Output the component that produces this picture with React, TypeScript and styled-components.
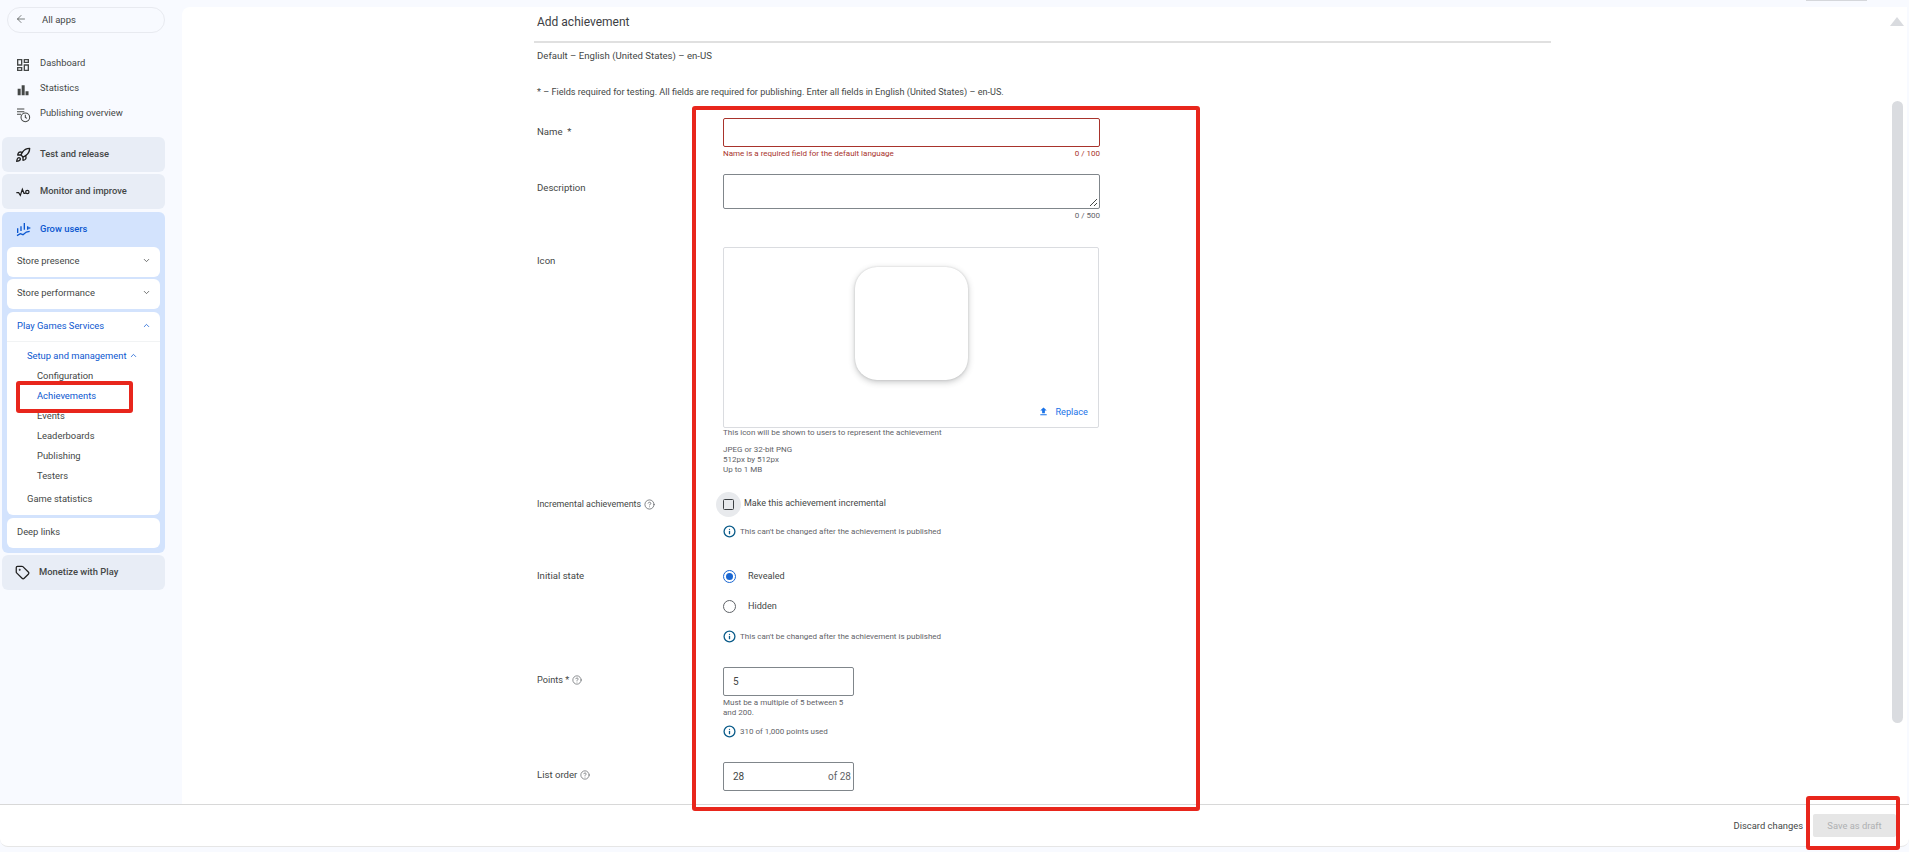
import React, { FunctionComponent } from "react";
import styled, { createGlobalStyle } from "styled-components";
import { ArrowLeft, ChevronDown, ChevronUp, CircleHelp, Info, Rocket, Tag } from "lucide-react";

const GlobalStyle = createGlobalStyle`
  html, body {
    margin: 0;
    height: 100%;
    overflow: hidden;
    background: #f8faff;
    font-family: Roboto, "Liberation Sans", sans-serif;
    color: #444746;
  }
`;

const Page = styled.div`
  position: relative;
  width: 1909px;
  height: 852px;
  display: flex;
  flex-direction: column;
  overflow: hidden;
`;

const Body = styled.div`
  display: flex;
  height: 804px;
  flex: none;
`;

const Sidebar = styled.nav`
  width: 182px;
  flex: none;
  padding: 7px 17px 0 2px;
  box-sizing: border-box;
  font-size: 10px;
`;

const BackPill = styled.div`
  margin-left: 5px;
  height: 26px;
  box-sizing: border-box;
  border: 1px solid #e8eaf0;
  border-radius: 13px;
  display: flex;
  align-items: center;
  gap: 15px;
  padding: 0 0 2px 7px;
  font-size: 9.5px;
`;

const TopLinks = styled.div`
  margin-top: 18px;
  margin-bottom: 11px;
`;

const TopLink = styled.div`
  height: 25px;
  display: flex;
  align-items: center;
  padding-left: 13px;
  gap: 9px;
  font-size: 9.4px;
  svg {
    flex: none;
    margin-bottom: -2px;
  }
  span {
    margin-bottom: 2px;
  }
`;

const NavCard = styled.div`
  height: 35px;
  box-sizing: border-box;
  background: #e8edf6;
  border-radius: 6px;
  margin-bottom: 2px;
  display: flex;
  align-items: center;
  gap: 9px;
  padding-left: 13px;
  font-size: 9.4px;
  font-weight: 500;
  svg {
    flex: none;
  }
  span {
    margin-bottom: 2px;
  }
`;

const GrowCard = styled.div`
  background: #d3e3fd;
  border-radius: 6px;
  margin: 3px 0 2px;
  padding: 0 5px 5px;
`;

const GrowHeader = styled.div`
  height: 33px;
  display: flex;
  align-items: center;
  gap: 9px;
  padding-left: 8px;
  color: #0b57d0;
  font-size: 9.4px;
  font-weight: 500;
  svg {
    flex: none;
  }
`;

const SubCard = styled.div<{ $top?: number }>`
  background: #fff;
  border-radius: 6px;
  margin-top: ${(p) => p.$top ?? 2}px;
`;

const SubHeader = styled.div<{ $active?: boolean; $line?: boolean }>`
  height: 30px;
  box-sizing: border-box;
  display: flex;
  align-items: center;
  justify-content: space-between;
  padding: 0 9px 3px 10px;
  font-size: 9.4px;
  color: ${(p) => (p.$active ? "#0b57d0" : "#444746")};
  border-bottom: ${(p) => (p.$line ? "1px solid #f1f3f4" : "none")};
`;

const SubList = styled.div`
  padding: 4px 0 6px;
`;

const SubItem = styled.div<{ $level: number; $active?: boolean }>`
  height: 20px;
  box-sizing: border-box;
  padding-bottom: 2px;
  display: flex;
  align-items: center;
  gap: 2px;
  font-size: 9.4px;
  padding-left: ${(p) => (p.$level === 1 ? 20 : 30)}px;
  color: ${(p) => (p.$active ? "#0b57d0" : "#444746")};
`;

const GameStats = styled(SubItem)`
  margin-top: 3px;
`;

const RightColumn = styled.div`
  flex: 1;
  display: flex;
  flex-direction: column;
  min-width: 0;
  padding-right: 2px;
`;

const TopStrip = styled.div`
  height: 7px;
  flex: none;
  display: flex;
  justify-content: flex-end;
  padding-right: 40px;
`;

const StripTab = styled.div`
  width: 61px;
  height: 1px;
  background: #d5d7db;
`;

const Main = styled.main`
  flex: 1;
  min-height: 0;
  background: #fff;
  border-radius: 8px 0 0 0;
  display: flex;
  overflow: hidden;
`;

const FormArea = styled.div`
  width: 1017px;
  margin-left: 352px;
  flex: none;
`;

const Title = styled.h1`
  margin: 0;
  height: 36px;
  box-sizing: border-box;
  padding: 8px 0 0 3px;
  border-bottom: 2px solid #e0e0e0;
  font-size: 12px;
  line-height: 14px;
  font-weight: 400;
  color: #3c4043;
`;

const Meta = styled.div<{ $top: number; $size: number }>`
  margin-top: ${(p) => p.$top}px;
  padding-left: 3px;
  font-size: ${(p) => p.$size}px;
  line-height: 14px;
`;

const Row = styled.div<{ $top: number }>`
  display: grid;
  grid-template-columns: 186px 377px;
  padding-left: 3px;
  margin-top: ${(p) => p.$top}px;
`;

const Label = styled.div<{ $pad?: number; $size?: number }>`
  padding-top: ${(p) => p.$pad ?? 7}px;
  font-size: ${(p) => p.$size ?? 9.6}px;
  line-height: 14px;
  display: flex;
  align-items: flex-start;
  gap: 3px;
  svg {
    margin-top: 2px;
    flex: none;
  }
`;

const Input = styled.div<{ $error?: boolean; $narrow?: boolean; $tall?: boolean }>`
  box-sizing: border-box;
  width: ${(p) => (p.$narrow ? "131px" : "377px")};
  height: ${(p) => (p.$tall ? 35 : 29)}px;
  border: 1px solid ${(p) => (p.$error ? "#a8332c" : "#80868b")};
  border-radius: 2px;
  display: flex;
  align-items: center;
  justify-content: space-between;
  padding: 0 2px 0 9px;
  font-size: 10px;
  position: relative;
`;

const ResizeHandle = styled.svg`
  position: absolute;
  right: 1px;
  bottom: 1px;
`;

const FieldNote = styled.div<{ $error?: boolean }>`
  display: flex;
  justify-content: space-between;
  height: 12px;
  line-height: 12px;
  margin-top: 1px;
  font-size: 8px;
  color: ${(p) => (p.$error ? "#a8332c" : "#5f6368")};
  span:last-child {
    margin-left: auto;
  }
`;

const IconBox = styled.div`
  box-sizing: border-box;
  width: 376px;
  height: 181px;
  border: 1px solid #dadce0;
  border-radius: 2px;
  padding-top: 19px;
  display: flex;
  flex-direction: column;
  align-items: center;
`;

const IconPreview = styled.div`
  width: 113px;
  height: 113px;
  flex: none;
  background: #fff;
  border-radius: 22px;
  box-shadow: 0 2px 6px rgba(60, 64, 67, 0.3), 0 0 2px rgba(60, 64, 67, 0.2);
`;

const ReplaceButton = styled.div`
  align-self: flex-end;
  margin: 26px 10px 0 0;
  display: flex;
  align-items: center;
  gap: 6px;
  color: #1a73e8;
  font-size: 9.2px;
`;

const SmallText = styled.div<{ $top?: number; $tight?: boolean; $width?: number }>`
  margin-top: ${(p) => p.$top ?? 0}px;
  font-size: 8px;
  line-height: ${(p) => (p.$tight ? 9.5 : 10)}px;
  width: ${(p) => (p.$width ? `${p.$width}px` : "auto")};
  color: #5f6368;
`;

const CheckRow = styled.div`
  height: 26px;
  display: flex;
  align-items: center;
  margin-left: -7px;
  font-size: 9px;
  span {
    margin-bottom: 2px;
  }
`;

const CheckHalo = styled.div`
  width: 25px;
  height: 25px;
  border-radius: 50%;
  background: #e8eaed;
  display: flex;
  align-items: center;
  justify-content: center;
  margin-right: 3px;
`;

const CheckBox = styled.div`
  width: 11px;
  height: 11px;
  border: 1.5px solid #3c4043;
  border-radius: 1.5px;
  box-sizing: border-box;
`;

const InfoLine = styled.div<{ $top: number }>`
  display: flex;
  align-items: center;
  gap: 4px;
  height: 14px;
  margin-top: ${(p) => p.$top}px;
  font-size: 8px;
  color: #5f6368;
  svg {
    flex: none;
    color: #0b5c8a;
  }
`;

const RadioRow = styled.div`
  height: 30px;
  display: flex;
  align-items: center;
  gap: 12px;
  font-size: 9.1px;
  span {
    margin-bottom: 1px;
  }
`;

const Radio = styled.div<{ $checked?: boolean }>`
  width: 13px;
  height: 13px;
  border-radius: 50%;
  box-sizing: border-box;
  border: 1.5px solid ${(p) => (p.$checked ? "#1a67d2" : "#5f6368")};
  display: flex;
  align-items: center;
  justify-content: center;
  &::after {
    content: "";
    width: 7px;
    height: 7px;
    border-radius: 50%;
    background: ${(p) => (p.$checked ? "#1a67d2" : "transparent")};
  }
`;

const OfTotal = styled.span`
  font-size: 10px;
  color: #5f6368;
`;

const ScrollColumn = styled.div`
  margin-left: auto;
  width: 16px;
  flex: none;
  padding-top: 10px;
  display: flex;
  flex-direction: column;
  align-items: center;
  margin-right: 2px;
`;

const ScrollArrow = styled.div`
  width: 0;
  height: 0;
  border-left: 7px solid transparent;
  border-right: 7px solid transparent;
  border-bottom: 9px solid #d9dbdf;
`;

const ScrollThumb = styled.div`
  margin-top: 75px;
  width: 11px;
  height: 622px;
  border-radius: 6px;
  background: #dadce0;
`;

const Footer = styled.footer`
  height: 43px;
  flex: none;
  box-sizing: border-box;
  background: #fff;
  border-top: 1px solid #d8d8d8;
  border-bottom: 1px solid #e6e6e6;
  border-radius: 0 0 8px 8px;
  display: flex;
  align-items: center;
  justify-content: flex-end;
  gap: 10px;
  padding-right: 13px;
  font-size: 9.4px;
`;

const SaveButton = styled.div`
  width: 83px;
  height: 23px;
  background: #e6e6e6;
  border-radius: 2px;
  color: #aeb0b2;
  display: flex;
  align-items: center;
  justify-content: center;
`;

const Annotation = styled.div<{ $x: number; $y: number; $w: number; $h: number }>`
  position: absolute;
  left: ${(p) => p.$x}px;
  top: ${(p) => p.$y}px;
  width: ${(p) => p.$w}px;
  height: ${(p) => p.$h}px;
  box-sizing: border-box;
  border: 4px solid #e8261c;
  border-radius: 3px;
  pointer-events: none;
`;

const DashboardIcon = () => (
  <svg width="16" height="16" viewBox="0 0 24 24" fill="#444746">
    <path d="M19 5v2h-4V5h4M9 5v6H5V5h4m10 8v6h-4v-6h4M9 17v2H5v-2h4M21 3h-8v6h8V3zM11 3H3v10h8V3zm10 8h-8v10h8V11zm-10 4H3v6h8v-6z" />
  </svg>
);

const StatsIcon = () => (
  <svg width="16" height="16" viewBox="0 0 24 24" fill="#444746">
    <path d="M4 10h4.5v10H4zM15.8 14h4.5v6h-4.5zM10 5h4.5v15H10z" />
  </svg>
);

const OverviewIcon = () => (
  <svg width="16" height="16" viewBox="0 0 24 24" fill="none" stroke="#444746" strokeWidth="1.6">
    <path d="M3 3h11M3 7h11M3 11h6" />
    <circle cx="15.5" cy="15.5" r="6.5" />
    <path d="M15.5 11.5v4l2.5 1.5" />
  </svg>
);

const PulseIcon = () => (
  <svg width="16" height="16" viewBox="0 0 24 24" fill="none" stroke="#1f1f1f" strokeWidth="1.8">
    <path d="M2 13h3.5l2.5 4 3-9 2.5 6h2.5" />
    <circle cx="18.5" cy="12" r="2.5" />
  </svg>
);

const GrowIcon = () => (
  <svg width="16" height="16" viewBox="0 0 24 24" fill="none" stroke="#0b57d0" strokeWidth="2">
    <path d="M4 11v7M9 8v7M14 3v10M19 8v5" />
    <path d="M3 22l5-3 4 1.5 5-4 5-1" />
    <path d="M18 10.5h5" />
  </svg>
);

const UploadIcon = () => (
  <svg width="11" height="11" viewBox="0 0 24 24" fill="#1a73e8">
    <path d="M9 16h6v-6h4l-7-7-7 7h4v6zm-4 2h14v2H5v-2z" />
  </svg>
);

const Help = ({ size = 10 }: { size?: number }) => <CircleHelp size={size} strokeWidth={1.7} color="#5f6368" />;

const InfoMark = () => <Info size={13} strokeWidth={2.4} />;

const App: FunctionComponent = () => {
  return (
    <Page>
      <GlobalStyle />
      <Body>
        <Sidebar>
          <BackPill>
            <ArrowLeft size={12} strokeWidth={1.4} />
            All apps
          </BackPill>
          <TopLinks>
            <TopLink><DashboardIcon /><span>Dashboard</span></TopLink>
            <TopLink><StatsIcon /><span>Statistics</span></TopLink>
            <TopLink><OverviewIcon /><span>Publishing overview</span></TopLink>
          </TopLinks>
          <NavCard><Rocket size={16} strokeWidth={2} color="#1f1f1f" /><span>Test and release</span></NavCard>
          <NavCard><PulseIcon /><span>Monitor and improve</span></NavCard>
          <GrowCard>
            <GrowHeader><GrowIcon />Grow users</GrowHeader>
            <SubCard>
              <SubHeader>Store presence<ChevronDown size={9} strokeWidth={2} /></SubHeader>
            </SubCard>
            <SubCard>
              <SubHeader>Store performance<ChevronDown size={9} strokeWidth={2} /></SubHeader>
            </SubCard>
            <SubCard $top={3}>
              <SubHeader $active $line>Play Games Services<ChevronUp size={9} strokeWidth={2} /></SubHeader>
              <SubList>
                <SubItem $level={1} $active>Setup and management <ChevronUp size={9} strokeWidth={2} /></SubItem>
                <SubItem $level={2}>Configuration</SubItem>
                <SubItem $level={2} $active>Achievements</SubItem>
                <SubItem $level={2}>Events</SubItem>
                <SubItem $level={2}>Leaderboards</SubItem>
                <SubItem $level={2}>Publishing</SubItem>
                <SubItem $level={2}>Testers</SubItem>
                <GameStats $level={1}>Game statistics</GameStats>
              </SubList>
            </SubCard>
            <SubCard $top={3}>
              <SubHeader>Deep links</SubHeader>
            </SubCard>
          </GrowCard>
          <NavCard><Tag size={15} strokeWidth={2} color="#1f1f1f" /><span>Monetize with Play</span></NavCard>
        </Sidebar>

        <RightColumn>
          <TopStrip><StripTab /></TopStrip>
          <Main>
            <FormArea>
              <Title>Add achievement</Title>
              <Meta $top={6} $size={9.6}>Default – English (United States) – en-US</Meta>
              <Meta $top={22} $size={9.1}>* – Fields required for testing. All fields are required for publishing. Enter all fields in English (United States) – en-US.</Meta>

              <Row $top={19}>
                <Label>Name&nbsp; *</Label>
                <div>
                  <Input $error />
                  <FieldNote $error>
                    <span>Name is a required field for the default language</span>
                    <span>0 / 100</span>
                  </FieldNote>
                </div>
              </Row>

              <Row $top={14}>
                <Label>Description</Label>
                <div>
                  <Input $tall>
                    <ResizeHandle width="9" height="9" viewBox="0 0 9 9" stroke="#444746" fill="none">
                      <path d="M1 8l7-7M5 8l3-3" />
                    </ResizeHandle>
                  </Input>
                  <FieldNote><span>0 / 500</span></FieldNote>
                </div>
              </Row>

              <Row $top={25}>
                <Label>Icon</Label>
                <div>
                  <IconBox>
                    <IconPreview />
                    <ReplaceButton><UploadIcon />Replace</ReplaceButton>
                  </IconBox>
                  <SmallText>This icon will be shown to users to represent the achievement</SmallText>
                  <SmallText $top={7}>
                    JPEG or 32-bit PNG<br />512px by 512px<br />Up to 1 MB
                  </SmallText>
                </div>
              </Row>

              <Row $top={16}>
                <Label $pad={6} $size={8.9}>Incremental achievements <Help size={11} /></Label>
                <div>
                  <CheckRow>
                    <CheckHalo><CheckBox /></CheckHalo>
                    <span>Make this achievement incremental</span>
                  </CheckRow>
                  <InfoLine $top={7}><InfoMark />This can't be changed after the achievement is published</InfoLine>
                </div>
              </Row>

              <Row $top={23}>
                <Label $pad={8}>Initial state</Label>
                <div>
                  <RadioRow><Radio $checked /><span>Revealed</span></RadioRow>
                  <RadioRow><Radio /><span>Hidden</span></RadioRow>
                  <InfoLine $top={8}><InfoMark />This can't be changed after the achievement is published</InfoLine>
                </div>
              </Row>

              <Row $top={24}>
                <Label $pad={6} $size={9.2}>Points * <Help /></Label>
                <div>
                  <Input $narrow>5</Input>
                  <SmallText $top={2} $tight $width={131}>Must be a multiple of 5 between 5 and 200.</SmallText>
                  <InfoLine $top={7}><InfoMark />310 of 1,000 points used</InfoLine>
                </div>
              </Row>

              <Row $top={24}>
                <Label $pad={6}>List order <Help /></Label>
                <div>
                  <Input $narrow>28<OfTotal>of 28</OfTotal></Input>
                </div>
              </Row>
            </FormArea>

            <ScrollColumn>
              <ScrollArrow />
              <ScrollThumb />
            </ScrollColumn>
          </Main>
        </RightColumn>
      </Body>

      <Footer>
        Discard changes
        <SaveButton>Save as draft</SaveButton>
      </Footer>

      <Annotation $x={692} $y={106} $w={508} $h={705} />
      <Annotation $x={16} $y={381} $w={117} $h={32} />
      <Annotation $x={1806} $y={796} $w={94} $h={54} />
    </Page>
  );
};

export default App;
